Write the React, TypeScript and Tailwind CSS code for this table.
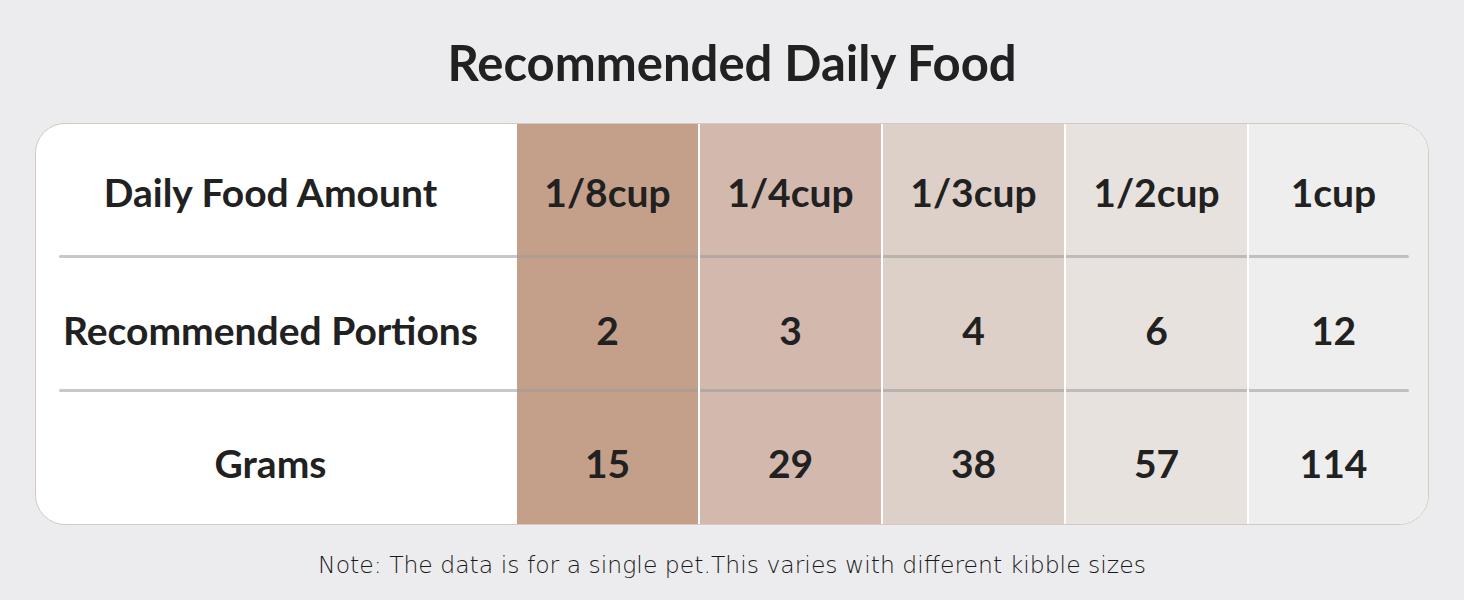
import React from "react";

const cols = [
  { head: "1/8cup", portions: "2", grams: "15", bg: "bg-[#c4a08a]", pad: "" },
  { head: "1/4cup", portions: "3", grams: "29", bg: "bg-[#d3b9ad]", pad: "" },
  { head: "1/3cup", portions: "4", grams: "38", bg: "bg-[#ddd0c9]", pad: "" },
  { head: "1/2cup", portions: "6", grams: "57", bg: "bg-[#e8e2df]", pad: "" },
  { head: "1cup", portions: "12", grams: "114", bg: "bg-[#efeeee]", pad: "pr-[12px]" },
];

const bold = "font-['Lato','Inter',sans-serif] font-bold text-[#212121]";

export default function App() {
  const rows: { label: string; key: "head" | "portions" | "grams"; h: string }[] = [
    { label: "Daily Food Amount", key: "head", h: "h-[131px] pt-[5px]" },
    { label: "Recommended Portions", key: "portions", h: "h-[131px] pt-[14px]" },
    { label: "Grams", key: "grams", h: "h-[132px] pt-[10px]" },
  ];
  return (
    <div className="w-[1464px] h-[600px] bg-[#ececee] flex flex-col items-center">
      <h1 className={`${bold} text-[49px] leading-none mt-[38px] h-[85px]`}>Recommended Daily Food</h1>
      <div className="w-[1394px] h-[402px] border border-[#d6c9c0] rounded-[30px] bg-white overflow-hidden">
        <div className="grid grid-cols-[479px_181px_181px_181px_181px_181px] gap-x-[2px] [&>*:nth-child(6n+1)]:mr-[-2px]">
          {rows.map((r, ri) => (
            <React.Fragment key={r.label}>
              <div className={`${r.h} flex items-center justify-center pr-[12px] ${bold} text-[39px]`}>{r.label}</div>
              {cols.map((c) => (
                <div key={c.head} className={`${r.h} ${c.bg} ${c.pad} flex items-center justify-center ${bold} text-[39px]`}>
                  {c[r.key]}
                </div>
              ))}
              {ri < 2 && (
                <>
                  <div className="h-[3px] bg-white pl-[23px]"><div className="h-full bg-[#9a9a9a]/55 rounded-l-full" /></div>
                  {cols.map((c, ci) => (
                    <div key={c.head} className={`h-[3px] ${c.bg} ${ci === 4 ? "pr-[21px]" : ""}`}>
                      <div className={`h-full bg-[#9a9a9a]/55 ${ci === 4 ? "rounded-r-full" : ""}`} />
                    </div>
                  ))}
                </>
              )}
            </React.Fragment>
          ))}
        </div>
      </div>
      <p className="mt-[23px] font-['DejaVu_Sans',sans-serif] font-extralight text-[23.5px] text-[#1a1a1a]">
        Note: The data is for a single pet.This varies with different kibble sizes
      </p>
    </div>
  );
}
